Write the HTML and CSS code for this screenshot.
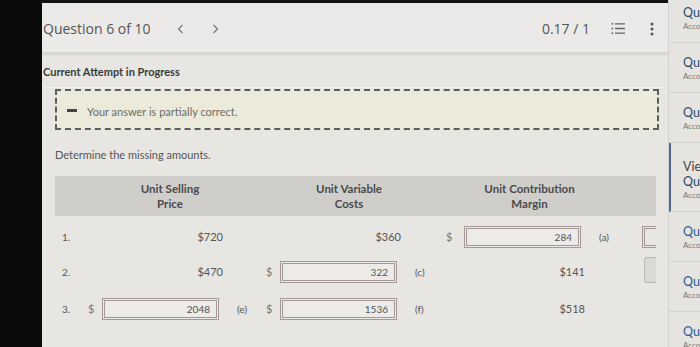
FILE: index.html
```html
<!DOCTYPE html>
<html lang="en">
<head>
    <meta charset="UTF-8">
    <meta name="viewport" content="width=device-width, initial-scale=1.0">
    <title>Question 6 of 10</title>
    <link rel="stylesheet" href="styles.css">
</head>
<body>
    <div class="screen">
        <div class="bezel"></div>

        <main class="main">
            <header class="topbar">
                <div class="topbar-left">
                    <span class="q-title">Question 6 of 10</span>
                    <span class="nav-arrow">
                        <svg width="7" height="10" viewBox="0 0 7 10"><path d="M5.5 1 L1.5 5 L5.5 9" fill="none" stroke="#777" stroke-width="1.2"/></svg>
                    </span>
                    <span class="nav-arrow">
                        <svg width="7" height="10" viewBox="0 0 7 10"><path d="M1.5 1 L5.5 5 L1.5 9" fill="none" stroke="#777" stroke-width="1.2"/></svg>
                    </span>
                </div>
                <div class="topbar-right">
                    <span class="score">0.17 / 1</span>
                    <span class="icon-list">
                        <svg width="15" height="13" viewBox="0 0 15 13">
                            <rect x="0.5" y="1" width="1.6" height="1.6" fill="#666"/>
                            <rect x="0.5" y="5.7" width="1.6" height="1.6" fill="#666"/>
                            <rect x="0.5" y="10.4" width="1.6" height="1.6" fill="#666"/>
                            <path d="M4 1.8 H14 M4 6.5 H14 M4 11.2 H14" stroke="#666" stroke-width="1.3"/>
                        </svg>
                    </span>
                    <span class="icon-more">
                        <svg width="4" height="14" viewBox="0 0 4 14">
                            <circle cx="2" cy="2" r="1.5" fill="#555"/>
                            <circle cx="2" cy="7" r="1.5" fill="#555"/>
                            <circle cx="2" cy="12" r="1.5" fill="#555"/>
                        </svg>
                    </span>
                </div>
            </header>

            <section class="attempt">
                <h2 class="attempt-title">Current Attempt in Progress</h2>
            </section>

            <section class="question">
                <div class="feedback">
                    <span class="feedback-mark"></span>
                    <span class="feedback-text">Your answer is partially correct.</span>
                </div>

                <p class="prompt">Determine the missing amounts.</p>

                <div class="grid">
                    <div class="head-row">
                        <div class="head-cell head-sell">Unit Selling<br>Price</div>
                        <div class="head-cell head-var">Unit Variable<br>Costs</div>
                        <div class="head-cell head-cm">Unit Contribution<br>Margin</div>
                    </div>

                    <div class="row">
                        <span class="num">1.</span>
                        <span class="cur"></span>
                        <span class="val">$720</span>
                        <span class="note"></span>
                        <span class="cur"></span>
                        <span class="val">$360</span>
                        <span class="note"></span>
                        <span class="cur">$</span>
                        <span class="val"><input class="answer" type="text" value="284"></span>
                        <span class="note">(a)</span>
                        <span class="extra"><span class="clip-input"></span></span>
                    </div>

                    <div class="row">
                        <span class="num">2.</span>
                        <span class="cur"></span>
                        <span class="val">$470</span>
                        <span class="note"></span>
                        <span class="cur">$</span>
                        <span class="val"><input class="answer" type="text" value="322"></span>
                        <span class="note">(c)</span>
                        <span class="cur"></span>
                        <span class="val">$141</span>
                        <span class="note"></span>
                        <span class="extra"><span class="clip-btn"></span></span>
                    </div>

                    <div class="row row-last">
                        <span class="num">3.</span>
                        <span class="cur">$</span>
                        <span class="val"><input class="answer" type="text" value="2048"></span>
                        <span class="note">(e)</span>
                        <span class="cur">$</span>
                        <span class="val"><input class="answer" type="text" value="1536"></span>
                        <span class="note">(f)</span>
                        <span class="cur"></span>
                        <span class="val">$518</span>
                        <span class="note"></span>
                        <span class="extra"></span>
                    </div>
                </div>
            </section>
        </main>

        <aside class="sidebar">
            <ul class="q-list">
                <li class="q-item"><span class="q-name">Question 1</span><span class="q-sub">Accounting</span></li>
                <li class="q-item"><span class="q-name">Question 2</span><span class="q-sub">Accounting</span></li>
                <li class="q-item"><span class="q-name">Question 3</span><span class="q-sub">Accounting</span></li>
                <li class="q-item current"><span class="q-view">View Policies</span><span class="q-name">Question 6</span><span class="q-sub">Accounting</span></li>
                <li class="q-item"><span class="q-name blue">Question 7</span><span class="q-sub">Accounting</span></li>
                <li class="q-item"><span class="q-name blue">Question 8</span><span class="q-sub">Accounting</span></li>
                <li class="q-item"><span class="q-name blue">Question 9</span><span class="q-sub">Accounting</span></li>
            </ul>
        </aside>
    </div>
</body>
</html>
```

FILE: styles.css
```css
body {
    margin: 0;
    padding: 0;
    background: #0c0c0c;
    font-family: Lato, "Open Sans", Arial, sans-serif;
    color: #3c3c3c;
}

.screen {
    display: flex;
    width: 700px;
    height: 347px;
    overflow: hidden;
}

.bezel {
    width: 42px;
    flex-shrink: 0;
    background: #0b0b0b;
}

.main {
    width: 626px;
    flex-shrink: 0;
    background: #e7e6e3;
    border-top: 3px solid #111;
    overflow: hidden;
}

/* header */
.topbar {
    height: 49px;
    display: flex;
    justify-content: space-between;
    align-items: center;
    background: #ebeae8;
    border-bottom: 2px solid #d6d5d2;
    box-shadow: 0 1px 2px rgba(0, 0, 0, 0.08);
    padding-left: 1px;
}

.topbar-left {
    display: flex;
    align-items: center;
    padding-top: 2px;
}

.q-title {
    font-family: "Open Sans", Lato, sans-serif;
    font-size: 14px;
    color: #555;
    margin-right: 26px;
}

.nav-arrow {
    display: flex;
    margin-right: 28px;
}

.topbar-right {
    display: flex;
    align-items: center;
    padding-right: 14px;
    padding-top: 2px;
}

.score {
    font-family: "Open Sans", Lato, sans-serif;
    font-size: 14px;
    color: #555;
    margin-right: 21px;
}

.icon-list {
    display: flex;
    margin-right: 24px;
}

.icon-more {
    display: flex;
}

/* attempt */
.attempt {
    padding: 11px 0 0 1px;
    height: 22px;
    border-bottom: 1px solid #efeeec;
}

.attempt-title {
    margin: 0;
    font-size: 11px;
    font-weight: bold;
    color: #3a3a3a;
}

/* question */
.question {
    padding: 1px 0 0 13px;
}

.feedback {
    width: 600px;
    height: 37px;
    border: 2px dashed #5e5e5a;
    background: #eceadb;
    display: flex;
    align-items: center;
}

.feedback-mark {
    width: 10px;
    height: 3px;
    background: #444;
    margin: 2px 10px 0 10px;
}

.feedback-text {
    font-size: 11px;
    color: #6b6b63;
    margin-top: 3px;
}

.prompt {
    margin: 18px 0 0;
    font-size: 11px;
    color: #555;
}

.grid {
    width: 601px;
    margin-top: 15px;
    overflow: hidden;
}

.head-row,
.row {
    display: grid;
    grid-template-columns: 32px 15px 123px 40px 15px 123px 42px 15px 127px 42px 27px;
}

.head-row {
    height: 40px;
    background: #cfcecb;
    align-items: center;
}

.head-cell {
    font-size: 11.5px;
    font-weight: bold;
    color: #4a4a4a;
    text-align: center;
    line-height: 15px;
    white-space: nowrap;
}

.head-sell {
    grid-column: 3;
    padding-left: 13px;
}

.head-var {
    grid-column: 6;
    padding-left: 15px;
}

.head-cm {
    grid-column: 9;
    padding-left: 12px;
}

.row {
    height: 35px;
    align-items: center;
    font-size: 11px;
    color: #555;
}

.head-row + .row {
    margin-top: 3px;
}

.row-last {
    margin-top: 2px;
}

.num {
    padding-left: 7px;
    font-size: 10px;
}

.cur {
    font-size: 11px;
    color: #777;
    padding-left: 1px;
}

.val {
    text-align: right;
    padding-right: 2px;
}

.note {
    padding-left: 12px;
    font-size: 10px;
    color: #555;
}

.answer {
    box-sizing: border-box;
    width: 117px;
    height: 22px;
    margin: 0 4px 0 0;
    border: 3px double #a39797;
    background: #ecebe8;
    text-align: right;
    font-family: Lato, Arial, sans-serif;
    font-size: 10px;
    color: #555;
    padding: 0 6px 0 0;
}

.extra {
    display: flex;
    justify-content: flex-end;
}

.clip-input {
    display: block;
    width: 20px;
    height: 22px;
    margin-right: -6px;
    border: 3px double #a39797;
    border-right: none;
    box-sizing: border-box;
    margin-left: 7px;
}

.clip-btn {
    display: block;
    width: 12px;
    height: 26px;
    margin-top: -4px;
    box-sizing: border-box;
    border: 1px solid #b8b8b6;
    border-right: none;
    border-radius: 3px 0 0 3px;
    background: #d9d9d7;
}

/* sidebar */
.sidebar {
    width: 32px;
    flex-shrink: 0;
    background: #e5e4e1;
    border-left: 1px solid #d2d1ce;
    overflow: hidden;
}

.q-list {
    list-style: none;
    margin: -7px 0 0;
    padding: 0;
}

.q-item {
    display: flex;
    flex-direction: column;
    padding: 12px 0 10px 14px;
    border-bottom: 1px solid #d4d3d0;
    white-space: nowrap;
}

.q-item.current {
    border-left: 2px solid #4d6a8c;
    padding-left: 12px;
    padding-top: 16px;
}

.q-view {
    font-size: 12.5px;
    line-height: 15px;
    color: #444;
}

.q-name {
    font-size: 12.5px;
    line-height: 15px;
    color: #2e4a6a;
}

.q-name.blue {
    color: #2a5b96;
}

.q-sub {
    font-size: 8px;
    line-height: 12px;
    color: #777;
}
```
